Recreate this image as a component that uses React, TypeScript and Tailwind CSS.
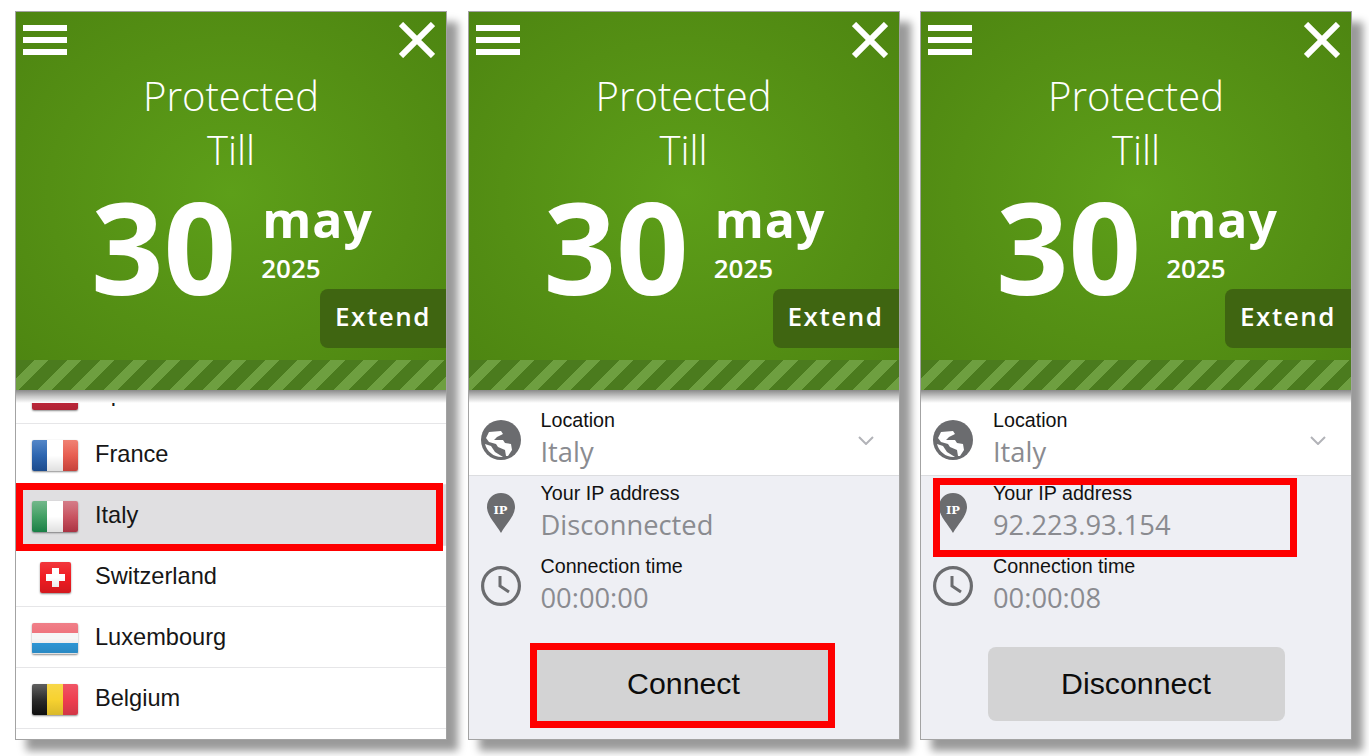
import type { ReactNode } from 'react';

const SANS = 'font-["Liberation_Sans",Arial,sans-serif]';

function Globe() {
    return (
        <svg width="40" height="40" viewBox="0 0 40 40" className="shrink-0">
            <circle cx="20" cy="20" r="20" fill="#6b6c6f" />
            <path d="M8 12 L20 11 L22 14 L16 17 L13 20 L22 20 L24 23 L30 24 L31 30 L27 36 L25 36 L24 30 L17 27 L15 24 L8 22 L5 18 Z" fill="#fff" />
            <path d="M4 24 L10 26 L14 32 L22 37 C14 38 6 32 4 24 Z" fill="#fff" />
        </svg>
    );
}

function Pin() {
    return (
        <div className="w-[40px] flex justify-center shrink-0">
            <div className="relative w-[28px] h-[40px]">
                <svg width="28" height="40" viewBox="0 0 28 40">
                    <path d="M14 0 C22 0 28 6 28 14 C28 23 19 31 14 40 C9 31 0 23 0 14 C0 6 6 0 14 0 Z" fill="#6b6c6f" />
                </svg>
                <span className="absolute left-0 right-0 top-[9px] text-center text-white text-[11.5px] leading-[16px] font-bold font-['DejaVu_Serif',serif]">IP</span>
            </div>
        </div>
    );
}

function Clock() {
    return (
        <svg width="40" height="40" viewBox="0 0 40 40" fill="none" stroke="#6b6c6f" className="shrink-0">
            <circle cx="20" cy="20" r="18.4" strokeWidth="3.2" />
            <path d="M19 10 V20 L28 26" strokeWidth="3" />
        </svg>
    );
}

function Header() {
    return (
        <div className="relative z-10">
            <div className="h-[348px] flex flex-col bg-[radial-gradient(ellipse_at_50%_52%,#5d9f19_0%,#548f14_60%,#4d8511_100%)] text-white font-['Open_Sans',sans-serif]">
                <div className="flex justify-between items-start pl-[7px] pr-[11px] pt-[10px] h-[47px]">
                    <div className="flex flex-col gap-[6px] pt-[3px] w-[44px]">
                        <div className="h-[6px] bg-white" />
                        <div className="h-[6px] bg-white" />
                        <div className="h-[6px] bg-white" />
                    </div>
                    <svg width="36" height="36" viewBox="0 0 36 36" stroke="#fff" strokeWidth="6">
                        <path d="M2 2 L34 34 M34 2 L2 34" />
                    </svg>
                </div>
                <div className="text-center font-light text-[40px] leading-[54px] mt-[10px]">Protected</div>
                <div className="text-center font-light text-[40px] leading-[54px]">Till</div>
                <div className="flex pl-[75px] mt-[14px] h-[110px]">
                    <div className="font-bold text-[127px] leading-[110px]">30</div>
                    <div className="pl-[26px] font-bold">
                        <div className="text-[50px] leading-[56px] tracking-[1px]">may</div>
                        <div className="text-[26px] leading-[36px] -ml-[1px] mt-[3px] font-semibold">2025</div>
                    </div>
                </div>
                <div className="self-end -mt-[12px] w-[126px] h-[59px] pb-[5px] rounded-l-lg bg-[#3f6511] flex items-center justify-center text-[26px] font-semibold tracking-[1.5px]">
                    Extend
                </div>
            </div>
            <div className="h-[30px] bg-[repeating-linear-gradient(135deg,#4b7b1e_0px,#4b7b1e_13px,#6e9f40_13px,#6e9f40_23.3px)]" />
            <div className="h-[13px] bg-linear-to-b from-[#8a8a8a] via-[#c8c8c8] to-white" />
        </div>
    );
}

function Flag({ children, small = false, vertical = false }: { children: ReactNode; small?: boolean; vertical?: boolean }) {
    return (
        <div className="w-[46px] flex justify-center shrink-0">
            <div className={`relative h-[31px] rounded-[2px] overflow-hidden flex shadow-[0_1px_2px_rgba(0,0,0,0.45)] ${small ? 'w-[31px]' : 'w-[46px]'} ${vertical ? 'flex-col' : ''}`}>
                {children}
                <div className="absolute inset-0 bg-linear-to-b from-[rgba(255,255,255,0.12)] via-transparent to-[rgba(0,0,0,0.12)]" />
            </div>
        </div>
    );
}

function CountryRow({ name, flag, selected = false }: { name: string; flag: ReactNode; selected?: boolean }) {
    return (
        <div className={`relative h-[61px] flex items-center pl-[16px] pt-[2px] gap-[17px] border-b border-[#e6e6e8] text-[23.6px] text-[#161616] ${selected ? 'bg-[#e0dfe1]' : 'bg-white'}`}>
            {flag}
            <span>{name}</span>
            {selected && <div className="absolute z-10 left-0 right-[3px] -top-[2px] -bottom-[6px] border-[7px] border-[#fe0000]" />}
        </div>
    );
}

function CountryPanel() {
    return (
        <Panel>
            <Header />
            <div className={`-mt-[40px] ${SANS}`}>
                <CountryRow
                    name="Spain"
                    flag={
                        <Flag vertical>
                            <div className="h-[8px] bg-[#c8283c]" />
                            <div className="flex-1 bg-[#f5c52e]" />
                            <div className="h-[8px] bg-[#c8283c]" />
                        </Flag>
                    }
                />
                <CountryRow
                    name="France"
                    flag={
                        <Flag>
                            <div className="flex-1 bg-linear-to-b from-[#3c76c0] to-[#1f55a0]" />
                            <div className="flex-1 bg-white" />
                            <div className="flex-1 bg-linear-to-b from-[#ee7060] to-[#e04a42]" />
                        </Flag>
                    }
                />
                <CountryRow
                    name="Italy"
                    selected
                    flag={
                        <Flag>
                            <div className="flex-1 bg-linear-to-b from-[#5fae7a] to-[#1c9150]" />
                            <div className="flex-1 bg-white" />
                            <div className="flex-1 bg-linear-to-b from-[#cf6b78] to-[#c23a4c]" />
                        </Flag>
                    }
                />
                <CountryRow
                    name="Switzerland"
                    flag={
                        <Flag small>
                            <div className="relative w-full bg-[#f01c22]">
                                <div className="absolute left-[6px] right-[6px] top-[12px] h-[7px] bg-white" />
                                <div className="absolute top-[6px] bottom-[6px] left-[12px] w-[7px] bg-white" />
                            </div>
                        </Flag>
                    }
                />
                <CountryRow
                    name="Luxembourg"
                    flag={
                        <Flag vertical>
                            <div className="flex-1 bg-[#ee6e78]" />
                            <div className="flex-1 bg-[#f6f6f6]" />
                            <div className="flex-1 bg-[#2f9bdc]" />
                        </Flag>
                    }
                />
                <CountryRow
                    name="Belgium"
                    flag={
                        <Flag>
                            <div className="flex-1 bg-linear-to-b from-[#4a4a4a] to-[#111]" />
                            <div className="flex-1 bg-[#f7d230]" />
                            <div className="flex-1 bg-[#ee3e50]" />
                        </Flag>
                    }
                />
            </div>
        </Panel>
    );
}

function InfoRow({ icon, label, value, chevron = false, highlight = false, white = false }: { icon: ReactNode; label: string; value: string; chevron?: boolean; highlight?: boolean; white?: boolean }) {
    return (
        <div className={`relative h-[73px] flex items-center pl-[12px] gap-[20px] ${white ? 'bg-white border-b border-[#dcdde0] pt-[2px]' : ''}`}>
            {icon}
            <div className="flex-1">
                <div className={`text-[19.7px] leading-[24px] text-[#111] ${SANS}`}>{label}</div>
                <div className="text-[27.3px] leading-[40px] text-[#8a8b90] font-['Open_Sans',sans-serif]">{value}</div>
            </div>
            {chevron && (
                <svg width="16" height="9" viewBox="0 0 16 9" fill="none" stroke="#b2b3b8" strokeWidth="2" className="mr-[25px]">
                    <path d="M1 1 L8 8 L15 1" />
                </svg>
            )}
            {highlight && <div className="absolute left-[12px] w-[364px] top-[2px] h-[79px] border-[7px] border-[#fe0000]" />}
        </div>
    );
}

function StatusPanel({ ip, time, button, ipHighlight = false, buttonHighlight = false }: { ip: string; time: string; button: string; ipHighlight?: boolean; buttonHighlight?: boolean }) {
    return (
        <Panel>
            <Header />
            <div className="flex-1 bg-[#eeeff4]">
                <InfoRow icon={<Globe />} label="Location" value="Italy" chevron white />
                <InfoRow icon={<Pin />} label="Your IP address" value={ip} highlight={ipHighlight} />
                <InfoRow icon={<Clock />} label="Connection time" value={time} />
                <div className="flex justify-center pt-[25px]">
                    <div className={`relative w-[297px] h-[74px] bg-[#d3d3d4] flex items-center justify-center text-[30.3px] text-[#0c0c0c] ${buttonHighlight ? '' : 'rounded-lg'} ${SANS}`}>
                        {button}
                        {buttonHighlight && <div className="absolute -left-[5px] -right-[3px] -top-[4px] -bottom-[7px] border-[7px] border-[#fe0000]" />}
                    </div>
                </div>
            </div>
        </Panel>
    );
}

function Panel({ children }: { children: ReactNode }) {
    return (
        <div className="w-[432px] h-[729px] flex flex-col overflow-hidden border border-[#a3a3a3] bg-white">
            {children}
        </div>
    );
}

function Shadowed({ children }: { children: ReactNode }) {
    return <div className="shadow-[11px_11px_8px_rgba(0,0,0,0.4)]">{children}</div>;
}

export default function App() {
    return (
        <div className="w-[1369px] h-[756px] overflow-hidden bg-white flex items-start gap-[20.5px] pl-[15px] pt-[11px]">
            <Shadowed>
                <CountryPanel />
            </Shadowed>
            <Shadowed>
                <StatusPanel ip="Disconnected" time="00:00:00" button="Connect" buttonHighlight />
            </Shadowed>
            <Shadowed>
                <StatusPanel ip="92.223.93.154" time="00:00:08" button="Disconnect" ipHighlight />
            </Shadowed>
        </div>
    );
}
